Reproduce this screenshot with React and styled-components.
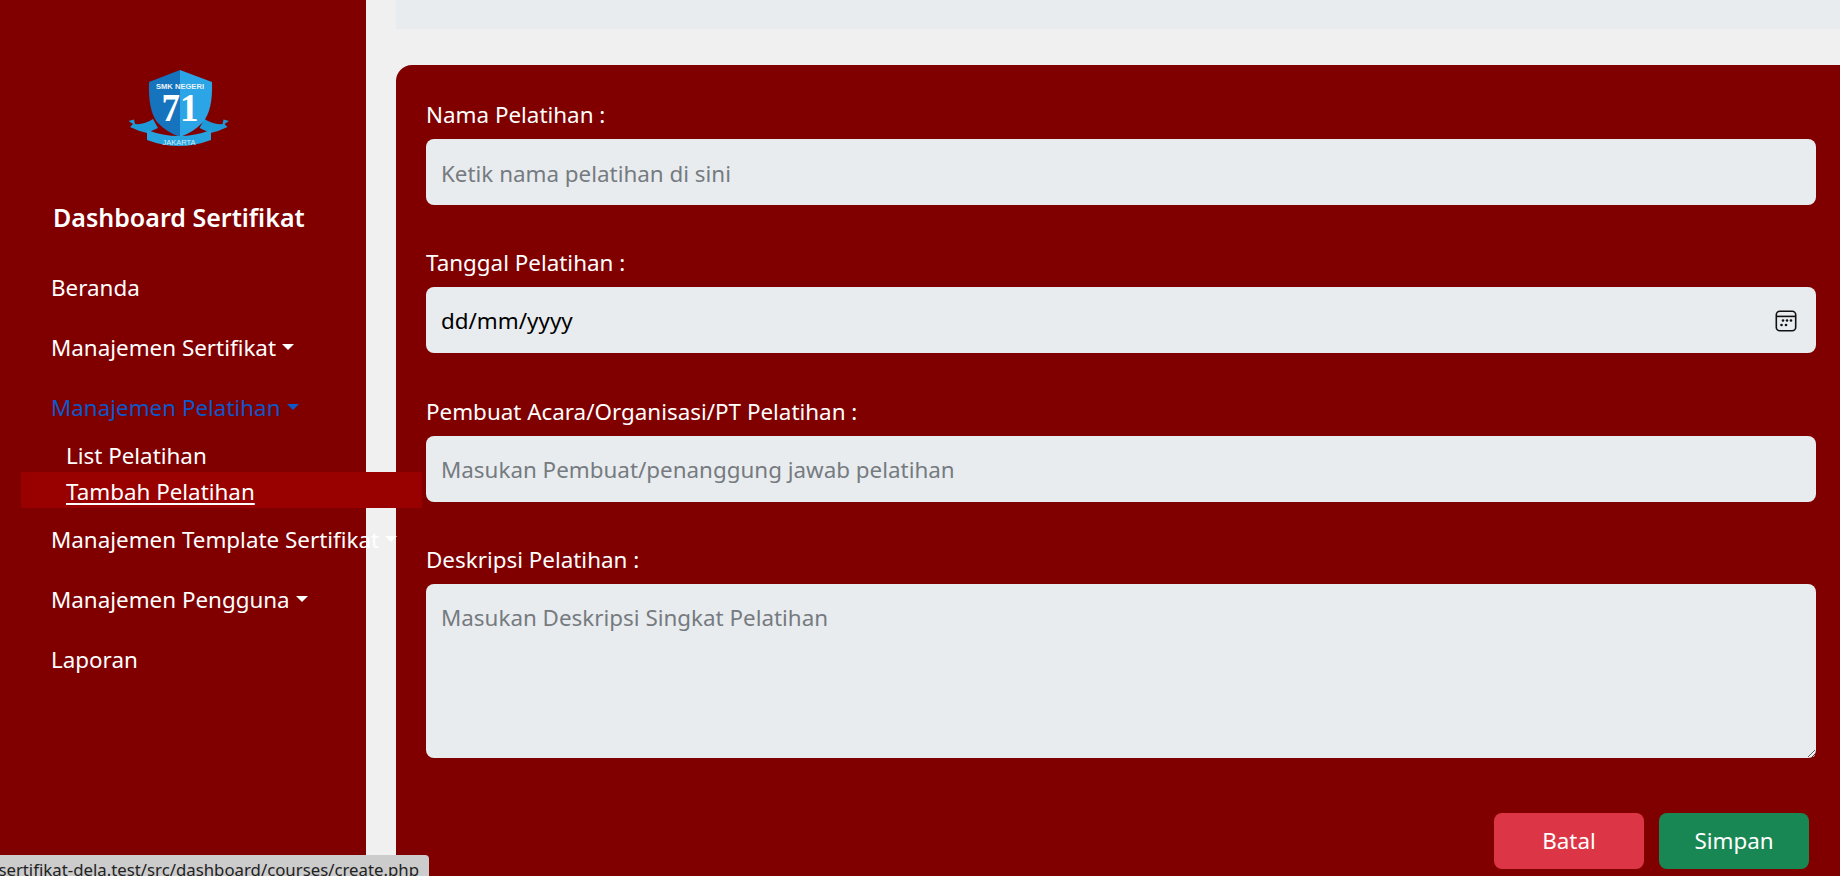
import styled, { createGlobalStyle } from "styled-components";

const GlobalStyle = createGlobalStyle`
  html, body {
    margin: 0;
    height: 100%;
    overflow: hidden;
    background: #f0f0f0;
  }
  * { box-sizing: border-box; }
  body {
    font-family: "Noto Sans", "Open Sans", sans-serif;
    font-size: 22.4px;
    line-height: 30px;
    color: #fff;
  }
`;

const Page = styled.div`
  display: flex;
  height: 876px;
  overflow: hidden;
  position: relative;
`;

const Sidebar = styled.aside`
  width: 366px;
  flex: none;
  background: #800000;
  padding-top: 70px;
  position: relative;
  z-index: 2;
`;

const LogoWrap = styled.div`
  padding-left: 128px;
  height: 80px;
`;

const Title = styled.h1`
  margin: 52px 0 0 53px;
  font-size: 25px;
  line-height: 30px;
  font-weight: 600;
  white-space: nowrap;
`;

const Nav = styled.nav`
  margin-top: 26px;
  display: flex;
  flex-direction: column;
`;

const NavLink = styled.a`
  display: block;
  padding-left: 51px;
  height: 60px;
  line-height: 60px;
  white-space: nowrap;
  color: ${(p) => (p.$open ? "#0a58ca" : "#fff")};
`;

const Caret = styled.span`
  display: inline-block;
  margin-left: 6px;
  vertical-align: 6px;
  border-top: 6px solid currentColor;
  border-left: 6px solid transparent;
  border-right: 6px solid transparent;
`;

const SubList = styled.div`
  margin-top: -2px;
  margin-bottom: 2px;
  margin-left: 21px;
  width: 401px;
`;

const SubLink = styled.a`
  display: block;
  height: 36px;
  line-height: 36px;
  padding: 2px 0 0 45px;
  background: ${(p) => (p.$active ? "#990000" : "transparent")};
  text-decoration: ${(p) => (p.$active ? "underline" : "none")};
  text-underline-offset: 3px;
`;

const Main = styled.main`
  flex: 1;
  min-width: 0;
  padding-left: 30px;
`;

const TopBar = styled.div`
  height: 29px;
  background: #e9ecef;
`;

const Card = styled.form`
  margin-top: 36px;
  height: 900px;
  background: #800000;
  border-radius: 16px 0 0 0;
  padding: 36px 24px 0 30px;
`;

const Field = styled.div`
  margin-bottom: 44.25px;
`;

const Label = styled.label`
  display: block;
  height: 30px;
  margin-bottom: 8px;
  line-height: 28px;
`;

const Input = styled.input`
  display: block;
  width: 100%;
  height: 66px;
  border: 0;
  border-radius: 8px;
  padding: 2px 15px 0;
  background: #e9ecef;
  font: inherit;
  color: #212529;
  outline: none;

  &::placeholder {
    color: #757b80;
    opacity: 1;
  }
`;

const DateBox = styled.div`
  display: flex;
  align-items: center;
  justify-content: space-between;
  height: 66px;
  border-radius: 8px;
  padding: 2px 19px 0 15px;
  background: #e9ecef;
  color: #000;
`;

const TextArea = styled(Input).attrs({ as: "textarea" })`
  height: 174px;
  padding-top: 19px;
  line-height: 30px;
  resize: vertical;
`;

const Actions = styled.div`
  margin-top: 55px;
  padding-right: 7px;
  display: flex;
  justify-content: flex-end;
  gap: 15px;
`;

const Button = styled.button`
  width: 150px;
  height: 56px;
  border: 0;
  border-radius: 8px;
  font: inherit;
  color: #fff;
  background: ${(p) => (p.$tone === "danger" ? "#dc3545" : "#198754")};
`;

const StatusBar = styled.div`
  position: absolute;
  left: 0;
  bottom: 0;
  width: 429px;
  height: 21px;
  z-index: 3;
  overflow: hidden;
  background: #cccccc;
  border-top-right-radius: 4px;
  color: #222;
  font-size: 16.8px;
  line-height: 30px;
  white-space: nowrap;
  direction: rtl;
  padding-right: 10px;
`;

const Logo = () => (
  <svg width="102" height="80" viewBox="0 0 102 80">
    {/* ribbon tails */}
    <path d="M0.5 51 L6 49.5 L7 54 Q16 55 25 49 L30 58 L19 63 Q10 61 2 57 L5 54 Z" fill="#1e9ad9" />
    <path d="M101 51 L95.5 49.5 L94.5 54 Q85.5 55 76.5 49 L71.5 58 L82.5 63 Q91.5 61 99.5 57 L96.5 54 Z" fill="#1e9ad9" />
    {/* shield */}
    <path d="M52 0 L21 12 Q20 40 29 52 Q38 62 52 67 Z" fill="#1673bd" />
    <path d="M52 0 L84 12 Q85 40 75 52 Q66 62 52 67 Z" fill="#2ba5e6" />
    <text x="52" y="19" textAnchor="middle" textLength="48" lengthAdjust="spacingAndGlyphs" fontFamily="Liberation Sans, sans-serif" fontWeight="700" fontSize="7.5" fill="#e8f3fb">
      SMK NEGERI
    </text>
    <text x="52" y="51" textAnchor="middle" textLength="37" lengthAdjust="spacingAndGlyphs" fontFamily="Liberation Serif, serif" fontWeight="700" fontSize="41" fill="#fff">
      71
    </text>
    {/* ribbon band */}
    <path d="M19 60 Q51 72 83 60 L83 70 Q51 82 19 70 Z" fill="#27a3e0" />
    <text x="51" y="75" textAnchor="middle" textLength="33" lengthAdjust="spacingAndGlyphs" fontFamily="Liberation Sans, sans-serif" fontSize="7.5" fill="#d8eefa">
      JAKARTA
    </text>
  </svg>
);

const CalendarIcon = () => (
  <svg width="22" height="22" viewBox="0 0 22 22" fill="none" stroke="#111" strokeWidth="1.6">
    <rect x="1.3" y="1.3" width="19.4" height="19.4" rx="3.5" />
    <path d="M1.5 6.4 H20.5" />
    <g fill="#111" stroke="none">
      <circle cx="8" cy="10.5" r="1.3" />
      <circle cx="12" cy="10.5" r="1.3" />
      <circle cx="16" cy="10.5" r="1.3" />
      <circle cx="6.5" cy="15" r="1.3" />
      <circle cx="11" cy="15" r="1.3" />
    </g>
  </svg>
);

export default function App() {
  return (
    <Page>
      <GlobalStyle />
      <Sidebar>
        <LogoWrap>
          <Logo />
        </LogoWrap>
        <Title>Dashboard Sertifikat</Title>
        <Nav>
          <NavLink>Beranda</NavLink>
          <NavLink>
            Manajemen Sertifikat
            <Caret />
          </NavLink>
          <NavLink $open>
            Manajemen Pelatihan
            <Caret />
          </NavLink>
          <SubList>
            <SubLink>List Pelatihan</SubLink>
            <SubLink $active>Tambah Pelatihan</SubLink>
          </SubList>
          <NavLink>
            Manajemen Template Sertifikat
            <Caret />
          </NavLink>
          <NavLink>
            Manajemen Pengguna
            <Caret />
          </NavLink>
          <NavLink>Laporan</NavLink>
        </Nav>
      </Sidebar>
      <Main>
        <TopBar />
        <Card>
          <Field>
            <Label>Nama Pelatihan :</Label>
            <Input placeholder="Ketik nama pelatihan di sini" />
          </Field>
          <Field>
            <Label>Tanggal Pelatihan :</Label>
            <DateBox>
              <span>dd/mm/yyyy</span>
              <CalendarIcon />
            </DateBox>
          </Field>
          <Field>
            <Label>Pembuat Acara/Organisasi/PT Pelatihan :</Label>
            <Input placeholder="Masukan Pembuat/penanggung jawab pelatihan" />
          </Field>
          <Field>
            <Label>Deskripsi Pelatihan :</Label>
            <TextArea placeholder="Masukan Deskripsi Singkat Pelatihan" />
          </Field>
          <Actions>
            <Button type="button" $tone="danger">Batal</Button>
            <Button type="button">Simpan</Button>
          </Actions>
        </Card>
      </Main>
      <StatusBar>sertifikat-dela.test/src/dashboard/courses/create.php</StatusBar>
    </Page>
  );
}
